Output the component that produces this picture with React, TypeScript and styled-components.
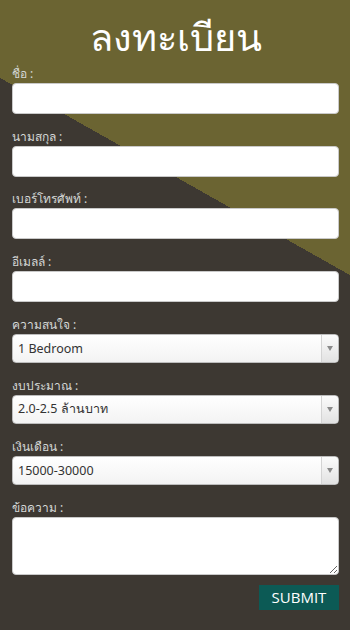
import React from 'react';
import styled, { createGlobalStyle } from 'styled-components';

const GlobalStyle = createGlobalStyle`
  html, body {
    margin: 0;
    padding: 0;
  }
  body {
    font-family: "Noto Sans", "DejaVu Sans", sans-serif;
  }
`;

const Page = styled.div`
  width: 350px;
  height: 630px;
  box-sizing: border-box;
  padding: 0 11px 0 12px;
  background: linear-gradient(29.4deg, #3d3832 0, #3d3832 481px, #6b6432 481px, #6b6432 100%);
  overflow: hidden;
`;

const Title = styled.h1`
  margin: 0;
  padding-top: 9px;
  height: 56px;
  text-align: center;
  font-size: 38px;
  font-weight: 400;
  line-height: 54px;
  color: #ffffff;
`;

const Form = styled.form`
  display: flex;
  flex-direction: column;
`;

const Field = styled.div`
  display: flex;
  flex-direction: column;
`;

const Label = styled.label`
  font-size: 12px;
  line-height: 18px;
  height: 18px;
  color: #d4d7d6;
`;

const Input = styled.input`
  box-sizing: border-box;
  width: 100%;
  height: 31px;
  margin: 0 0 13.67px;
  border: 1px solid #c9c9c9;
  border-radius: 4px;
  background: #fff;
`;

const SelectBox = styled.div`
  position: relative;
  box-sizing: border-box;
  height: 29px;
  margin: 0 0 14px;
  border: 1px solid #bdbdbd;
  border-radius: 4px;
  background: linear-gradient(#ffffff, #f3f3f3);
  display: flex;
  align-items: center;
  padding-left: 5px;
  font-size: 12.5px;
  color: #333;
`;

const Arrow = styled.span`
  position: absolute;
  right: 0;
  top: 0;
  bottom: 0;
  width: 16px;
  border-left: 1px solid #d4d4d4;
  border-radius: 0 4px 4px 0;
  background: linear-gradient(#fbfbfb, #e2e2e2);
  display: flex;
  align-items: center;
  justify-content: center;
  &::after {
    content: '';
    border-left: 3px solid transparent;
    border-right: 3px solid transparent;
    border-top: 5px solid #8a8a8a;
  }
`;

const TextArea = styled.textarea`
  box-sizing: border-box;
  width: 100%;
  height: 58px;
  margin: 0 0 10px;
  border: 1px solid #c9c9c9;
  border-radius: 4px;
  background: #fff;
  resize: vertical;
`;

const Actions = styled.div`
  display: flex;
  justify-content: flex-end;
`;

const Submit = styled.button`
  width: 80px;
  height: 25px;
  border: 0;
  padding: 0;
  background: #0c5a55;
  color: #fff;
  font-family: "Open Sans", "Noto Sans", sans-serif;
  font-size: 15px;
  line-height: 25px;
`;

const selects = [
  { label: 'ความสนใจ :', value: '1 Bedroom' },
  { label: 'งบประมาณ :', value: '2.0-2.5 ล้านบาท' },
  { label: 'เงินเดือน :', value: '15000-30000' },
];

const App: React.FC = () => (
  <>
    <GlobalStyle />
    <Page>
      <Title>ลงทะเบียน</Title>
      <Form onSubmit={(e) => e.preventDefault()}>
        {['ชื่อ :', 'นามสกุล :', 'เบอร์โทรศัพท์ :', 'อีเมลล์ :'].map((l) => (
          <Field key={l}>
            <Label>{l}</Label>
            <Input type="text" />
          </Field>
        ))}
        {selects.map((s) => (
          <Field key={s.label}>
            <Label>{s.label}</Label>
            <SelectBox>
              {s.value}
              <Arrow />
            </SelectBox>
          </Field>
        ))}
        <Field>
          <Label>ข้อความ :</Label>
          <TextArea />
        </Field>
        <Actions>
          <Submit type="submit">SUBMIT</Submit>
        </Actions>
      </Form>
    </Page>
  </>
);

export default App;
